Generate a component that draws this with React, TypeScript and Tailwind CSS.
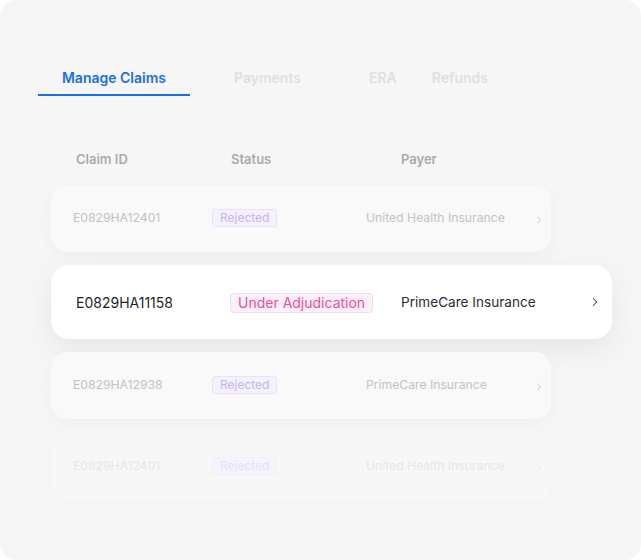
import { ChevronRight } from "lucide-react";

type Claim = {
  id: string;
  status: string;
  payer: string;
};

const tabs = [
  { label: "Payments", cls: "ml-[44px]" },
  { label: "ERA", cls: "ml-[68px]" },
  { label: "Refunds", cls: "ml-[35px]" },
];

function FadedRow({ claim, faint }: { claim: Claim; faint?: boolean }) {
  return (
    <div
      className={`flex items-center h-[67px] w-[500px] rounded-[16px] pl-[22px] text-[12.2px] ${
        faint
          ? "bg-[#f7f7f8] text-[#e6e6e9] shadow-[0_4px_14px_rgba(0,0,0,0.012)]"
          : "bg-[#f9f9fa] text-[#c2c2c7] shadow-[0_4px_16px_rgba(0,0,0,0.035)]"
      }`}
    >
      <span className="w-[139px]">{claim.id}</span>
      <span className="w-[154px]">
        <span
          className={`inline-block rounded-[3px] border px-[7px] leading-[16px] text-[12px] ${
            faint
              ? "border-[#f2eefb] bg-[#f6f4fb] text-[#e5dcfb]"
              : "border-[#e9e0fb] bg-[#f5f1fd] text-[#c6b2f6]"
          }`}
        >
          {claim.status}
        </span>
      </span>
      <span className="w-[167px]">{claim.payer}</span>
      <ChevronRight
        size={12}
        strokeWidth={1.6}
        className={`mt-[2px] ${faint ? "text-[#e4e4e7]" : "text-[#b8b8bd]"}`}
      />
    </div>
  );
}

function ActiveRow({ claim }: { claim: Claim }) {
  return (
    <div className="flex items-center h-[74px] w-[561px] rounded-[18px] bg-white pl-[25px] text-[14px] text-[#1f1f29] shadow-[0_10px_30px_rgba(0,0,0,0.07)] my-[13px]">
      <span className="w-[154px]">{claim.id}</span>
      <span className="w-[171px]">
        <span className="inline-block rounded-[4px] border border-[#eadcfa] bg-[#fdf0f8] px-[7px] leading-[18px] text-[#ec4f9b]">
          {claim.status}
        </span>
      </span>
      <span className="w-[187px] text-[13.6px] text-[#2b2b36]">{claim.payer}</span>
      <ChevronRight size={14} strokeWidth={1.8} className="text-[#3f3f4f]" />
    </div>
  );
}

export default function App() {
  return (
    <div className="w-[641px] h-[560px] bg-white font-['Inter',sans-serif]">
      <div className="w-full h-full rounded-[16px] bg-[#f6f6f7] overflow-hidden">
        <div className="flex items-start pt-[68px] pl-[38px]">
          <div className="w-[152px] border-b-2 border-[#1a6fe3] pb-[6px] text-center text-[14px] leading-[20px] font-semibold text-[#1a6fe3]">
            Manage Claims
          </div>
          {tabs.map((t) => (
            <div
              key={t.label}
              className={`${t.cls} text-[14px] leading-[20px] font-semibold text-[#dfdfe3]`}
            >
              {t.label}
            </div>
          ))}
        </div>

        <div className="flex mt-[53px] pl-[76px] text-[13px] leading-[20px] font-semibold text-[#a9a9b0]">
          <span className="w-[155px]">Claim ID</span>
          <span className="w-[170px]">Status</span>
          <span>Payer</span>
        </div>

        <div className="flex flex-col pl-[51px] mt-[16px]">
          <FadedRow claim={{ id: "E0829HA12401", status: "Rejected", payer: "United Health Insurance" }} />
          <ActiveRow claim={{ id: "E0829HA11158", status: "Under Adjudication", payer: "PrimeCare Insurance" }} />
          <FadedRow claim={{ id: "E0829HA12938", status: "Rejected", payer: "PrimeCare Insurance" }} />
          <div className="mt-[14px]">
            <FadedRow faint claim={{ id: "E0829HA12401", status: "Rejected", payer: "United Health Insurance" }} />
          </div>
        </div>
      </div>
    </div>
  );
}
